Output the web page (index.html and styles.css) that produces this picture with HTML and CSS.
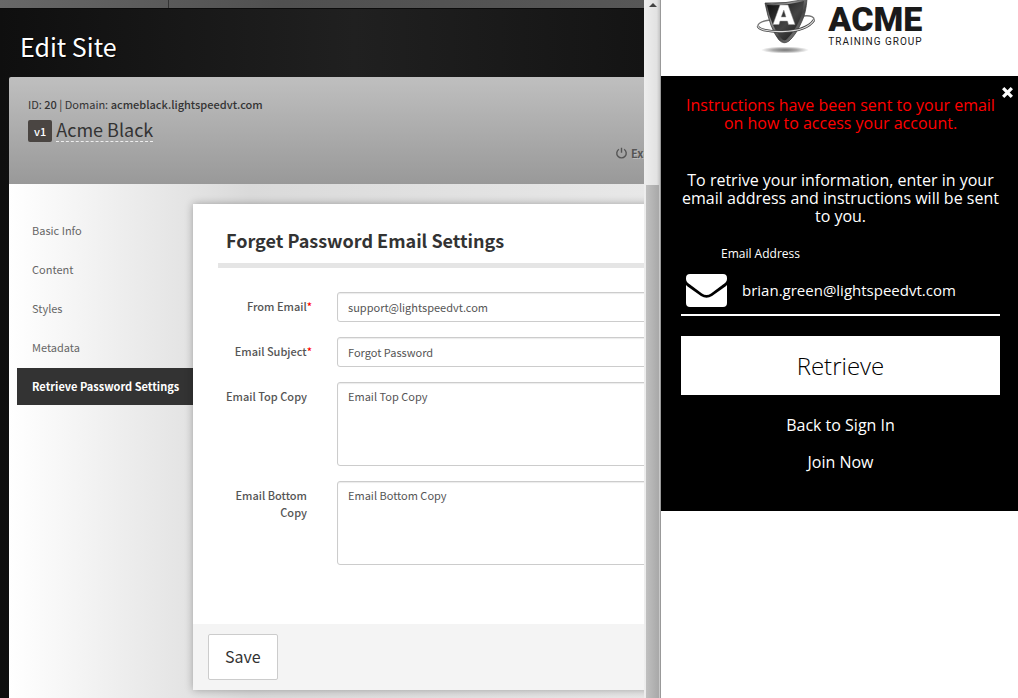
FILE: index.html
```html
<!DOCTYPE html>
<html lang="en">
<head>
<meta charset="utf-8">
<title>Edit Site</title>
<link rel="stylesheet" href="styles.css">
</head>
<body>
<div class="workspace">
  <div class="admin">
    <div class="admin-page">
      <div class="topbar"><span class="topbar-tab"></span></div>
      <h1 class="page-title">Edit Site</h1>
      <main class="site">
        <header class="site-header">
          <p class="site-meta">ID: <b>20</b> | Domain: <b>acmeblack.lightspeedvt.com</b></p>
          <div class="site-name"><span class="version">v1</span><a class="name-link" href="#">Acme Black</a></div>
          <a class="exit" href="#">
            <svg class="exit-icon" viewBox="0 0 14 14" aria-hidden="true"><path d="M4.2 2.4a5.1 5.1 0 1 0 5.6 0M7 .8v5.4"/></svg>
            Exit
          </a>
        </header>
        <div class="site-content">
          <nav class="tabs">
            <a class="tab" href="#">Basic Info</a>
            <a class="tab" href="#">Content</a>
            <a class="tab" href="#">Styles</a>
            <a class="tab" href="#">Metadata</a>
            <a class="tab tab-active" href="#">Retrieve Password Settings</a>
          </nav>
          <form class="card">
            <div class="card-body">
              <h2 class="card-title">Forget Password Email Settings</h2>
              <div class="field">
                <label class="label required" for="from">From Email<span class="star">*</span></label>
                <input class="control" id="from" type="text" value="support@lightspeedvt.com">
              </div>
              <div class="field">
                <label class="label required" for="subject">Email Subject<span class="star">*</span></label>
                <input class="control" id="subject" type="text" value="Forgot Password">
              </div>
              <div class="field">
                <label class="label" for="top">Email Top Copy</label>
                <textarea class="control area" id="top">Email Top Copy</textarea>
              </div>
              <div class="field">
                <label class="label" for="bottom">Email Bottom Copy</label>
                <textarea class="control area" id="bottom">Email Bottom Copy</textarea>
              </div>
            </div>
            <div class="card-footer"><button class="save" type="button">Save</button></div>
          </form>
        </div>
      </main>
    </div>
  </div>

  <div class="scrollbar" aria-hidden="true">
    <span class="scroll-arrow"></span>
    <span class="scroll-thumb"></span>
  </div>

  <aside class="login">
    <div class="brand">
      <svg class="brand-mark" viewBox="0 0 60 56" aria-hidden="true">
        <defs>
          <linearGradient id="metal" x1="0" y1="0" x2="1" y2="1">
            <stop offset="0" stop-color="#333"/><stop offset=".35" stop-color="#999"/><stop offset=".6" stop-color="#444"/><stop offset="1" stop-color="#aaa"/>
          </linearGradient>
          <linearGradient id="face" x1="0" y1="0" x2="1" y2="1">
            <stop offset="0" stop-color="#0c0c0c"/><stop offset=".55" stop-color="#444"/><stop offset="1" stop-color="#111"/>
          </linearGradient>
          <radialGradient id="shade"><stop offset="0" stop-color="#777"/><stop offset=".5" stop-color="#aaa"/><stop offset="1" stop-color="#fff"/></radialGradient>
        </defs>
        <ellipse cx="29" cy="50" rx="24" ry="3.500" fill="url(#shade)"/>
        <path d="M14 20C5 21 1 24 2 27M47 16c8-1 12 1 11 5" fill="none" stroke="#777" stroke-width="1.4"/>
        <path d="M9 3Q30 4 51-1Q50 13 46 21Q40 35 33 41Q28 45 23 40Q14 29 9 3Z" fill="url(#metal)" stroke="#333" stroke-width=".7"/>
        <path d="M11 5Q30 6 48 1Q47 13 43 21Q38 32 31 39Q28 42 25 38Q15 26 11 5Z" fill="url(#face)"/>
        <path d="M24 5h8l7 19.500h-6.500l-1-3.500h-7.500l-1 3.500h-6ZM27.800 10l-2.600 7h4.800Z" fill="#fff" fill-rule="evenodd" stroke="#999" stroke-width=".5"/>
        <path d="M2 26C2 33 48 36 58 20" fill="none" stroke="#444" stroke-width="2.600"/>
        <path d="M2 26C2 33 48 36 58 20" fill="none" stroke="#ddd" stroke-width="1.200"/>
      </svg>
      <div class="brand-text">
        <span class="brand-name">ACME</span>
        <span class="brand-sub">TRAINING GROUP</span>
      </div>
    </div>
    <form class="retrieve">
      <button class="close" type="button" aria-label="Close">
        <svg class="close-icon" viewBox="0 0 12 12" aria-hidden="true"><path d="M2 2l8 8M10 2l-8 8"/></svg>
      </button>
      <p class="notice">Instructions have been sent to your email on how to access your account.</p>
      <p class="help">To retrive your information, enter in your email address and instructions will be sent to you.</p>
      <label class="email-label" for="email">Email Address</label>
      <div class="email-row">
        <svg class="mail-icon" viewBox="0 0 41 33" aria-hidden="true">
          <path d="M4 0h33q4 0 4 4v1q0 3-4 5.500L25 19.500q-4.500 3-9 0L4 10.500Q0 8 0 5V4q0-4 4-4Z"/>
          <path d="M0 11q1 1 3 2.500L15 22q5.500 3.500 11 0l12-8.500q2-1.500 3-2.500v18q0 4-4 4H4q-4 0-4-4Z"/>
        </svg>
        <input class="email" id="email" type="text" value="brian.green@lightspeedvt.com">
      </div>
      <button class="submit" type="button">Retrieve</button>
      <a class="link" href="#">Back to Sign In</a>
      <a class="link" href="#">Join Now</a>
    </form>
  </aside>
</div>
</body>
</html>
```
FILE: styles.css
```css
* { box-sizing: border-box; }

body {
  margin: 0;
  background: #fff;
  font-family: "Noto Sans CJK SC", "Open Sans", sans-serif;
  font-size: 12px;
  line-height: 17px;
  color: #333;
}

h1, h2, p { margin: 0; }
a { color: inherit; text-decoration: none; }

.workspace {
  display: grid;
  grid-template-columns: minmax(0, 1fr) 17px 357px;
  min-height: 100vh;
}

/* Admin page, scrolled so that its right part is out of view */
.admin {
  display: flex;
  overflow: hidden;
  background: linear-gradient(90deg, #0f0f0f, #202020 55%, #141414);
}
.admin-page {
  display: flex;
  flex-direction: column;
  flex: 0 0 calc(100% + 64px);
}
.topbar {
  display: flex;
  height: 9px;
  background: linear-gradient(90deg, #686868, #505050 40%, #585858);
  border-bottom: 1px solid #0c0c0c;
}
.topbar-tab { width: 169px; border-right: 1px solid #333; }

.page-title {
  padding: 21px 20px 15px;
  font-size: 25px;
  font-weight: 400;
  line-height: 32px;
  color: #fff;
  text-shadow: 1px 1px 1px #000;
}

.site {
  display: flex;
  flex-direction: column;
  flex: 1;
  margin-left: 9px;
}
.site-header {
  display: flex;
  flex-direction: column;
  padding: 19px 19px 22px;
  background: linear-gradient(#bfbfbf, #999);
  border-radius: 2px 0 0 0;
}
.site-meta { font-size: 11px; }
.site-meta b { font-weight: 500; }
.site-name { display: flex; align-items: flex-end; gap: 4px; margin-top: 4px; }
.version {
  padding: 3px 6px 2px;
  border-radius: 2px;
  background: #4a4542;
  color: #fff;
  font-size: 11px;
  font-weight: 500;
}
.name-link {
  border-bottom: 1px dashed #eee;
  font-size: 18px;
  line-height: 24px;
}
.exit {
  display: flex;
  align-items: center;
  gap: 3px;
  align-self: flex-end;
  width: 74px;
  margin-top: 3px;
  color: #555;
  font-size: 11px;
  font-weight: 700;
  text-shadow: 1px 1px 0 #bbb;
}
.exit-icon { width: 13px; height: 13px; fill: none; stroke: #555; stroke-width: 1.5; }

.site-content {
  display: flex;
  flex: 1;
  padding: 20px 0 8px 8px;
  background: linear-gradient(90deg, #fff, #dadada 240px, #e8e8e8 640px);
}
.tabs {
  display: flex;
  flex-direction: column;
  gap: 2px;
  flex: 0 0 176px;
  padding-top: 8px;
}
.tab { padding: 10px 0 10px 15px; font-size: 11px; color: #666; }
.tab-active { background: #333; color: #fff; font-weight: 700; }

.card {
  display: flex;
  flex-direction: column;
  flex: 1;
  background: #fff;
  box-shadow: 0 0 8px rgba(0, 0, 0, .3);
}
.card-body { flex: 1; padding: 23px 25px; }
.card-title {
  margin-bottom: 24px;
  padding: 0 8px 9px;
  border-bottom: 5px solid #e5e5e5;
  font-size: 18px;
  line-height: 27px;
}
.field { display: flex; align-items: flex-start; margin-bottom: 15px; }
.label {
  flex: 0 0 89px;
  margin-right: 30px;
  padding-top: 6px;
  font-size: 11px;
  font-weight: 500;
  text-align: right;
  color: #555;
}
.required { flex-basis: 94px; margin-right: 25px; }
.star { color: red; }
.control {
  flex: 1;
  min-width: 0;
  height: 30px;
  padding: 4px 10px;
  border: 1px solid #ccc;
  border-radius: 3px;
  background: #fff;
  box-shadow: inset 0 1px 1px rgba(0, 0, 0, .08);
  font: 11px/17px "Noto Sans CJK SC", "Open Sans", sans-serif;
  color: #555;
}
.area { height: 84px; padding-top: 5px; resize: none; }

.card-footer { padding: 10px 15px; background: #f4f4f4; }
.save {
  height: 46px;
  padding: 0 16px 2px;
  border: 1px solid #ccc;
  border-radius: 2px;
  background: #fff;
  font: 16px/24px "Noto Sans CJK SC", "Open Sans", sans-serif;
  color: #333;
}

/* Scroll bar between the two windows */
.scrollbar {
  display: flex;
  flex-direction: column;
  padding: 3px 1px 0 2px;
  border-right: 1px solid #999;
  background: linear-gradient(90deg, #eee, #e2e2e2 80%, #c4c4c4);
}
.scroll-arrow {
  align-self: center;
  margin-bottom: 178px;
  border: solid transparent;
  border-width: 0 4px 4px;
  border-bottom-color: #444;
}
.scroll-thumb { flex: 1; background: linear-gradient(90deg, #c0c0c0, #a8a8a8); }

/* Login window */
.login { font-family: "Open Sans", sans-serif; }
.brand { display: flex; justify-content: center; gap: 12px; height: 76px; }
.brand-mark { width: 60px; height: 56px; }
.brand-text { display: flex; flex-direction: column; color: #1a1a1a; }
.brand-name { font: 900 34px/38px Roboto, sans-serif; }
.brand-sub { font: 10px/8px Roboto, sans-serif; letter-spacing: 1px; }

.retrieve {
  position: relative;
  display: flex;
  flex-direction: column;
  padding: 20px 18px 21px 20px;
  background: #000;
  color: #fff;
  font-size: 16px;
  line-height: 18px;
  text-align: center;
}
.close {
  position: absolute;
  top: 10px;
  right: 4px;
  display: flex;
  padding: 0;
  border: 0;
  background: none;
}
.close-icon { width: 13px; height: 13px; fill: none; stroke: #fff; stroke-width: 3; }
.notice { color: #f00; }
.help { margin-top: 39px; }
.email-label {
  margin: 20px 0 11px 40px;
  font-size: 12px;
  text-align: left;
}
.email-row {
  display: flex;
  align-items: center;
  gap: 15px;
  padding: 0 0 7px 5px;
  border-bottom: 2px solid #fff;
}
.mail-icon { width: 41px; height: 33px; fill: #fff; }
.email {
  flex: 1;
  min-width: 0;
  padding: 0 0 2px;
  border: 0;
  background: none;
  font: 15px/30px "Open Sans", sans-serif;
  color: #fff;
}
.submit {
  margin: 20px 0 21px;
  padding: 14px 0;
  border: 0;
  background: #fff;
  font: 300 24px/31px "Open Sans", sans-serif;
  color: #000;
}
.link { margin-bottom: 19px; }
```
